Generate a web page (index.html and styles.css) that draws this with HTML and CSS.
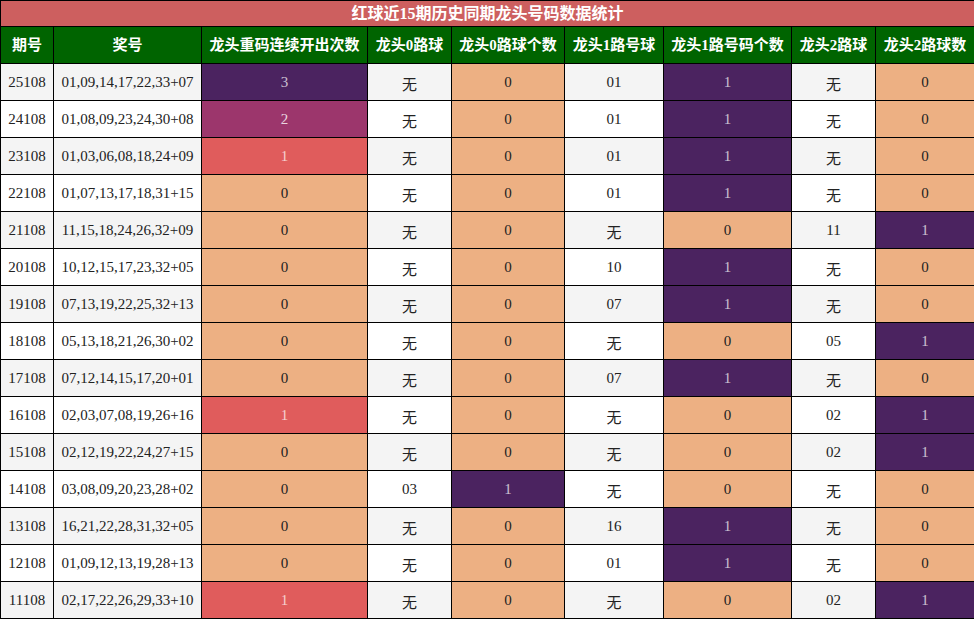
FILE: index.html
```html
<!DOCTYPE html>
<html lang="zh">
<head>
<meta charset="utf-8">
<title>红球近15期历史同期龙头号码数据统计</title>
<link rel="stylesheet" href="styles.css">
</head>
<body>
<table class="stats">
  <colgroup>
    <col class="c1"><col class="c2"><col class="c3"><col class="c4"><col class="c5"><col class="c6"><col class="c7"><col class="c8"><col class="c9">
  </colgroup>
  <thead>
    <tr class="title"><th colspan="9">红球近15期历史同期龙头号码数据统计</th></tr>
    <tr class="head">
      <th>期号</th><th>奖号</th><th>龙头重码连续开出次数</th><th>龙头0路球</th><th>龙头0路球个数</th><th>龙头1路号球</th><th>龙头1路号码个数</th><th>龙头2路球</th><th>龙头2路球数</th>
    </tr>
  </thead>
  <tbody>
    <tr><td>25108</td><td>01,09,14,17,22,33+07</td><td class="pu">3</td><td class="wu">无</td><td class="or">0</td><td>01</td><td class="pu">1</td><td class="wu">无</td><td class="or">0</td></tr>
    <tr><td>24108</td><td>01,08,09,23,24,30+08</td><td class="mg">2</td><td class="wu">无</td><td class="or">0</td><td>01</td><td class="pu">1</td><td class="wu">无</td><td class="or">0</td></tr>
    <tr><td>23108</td><td>01,03,06,08,18,24+09</td><td class="rd">1</td><td class="wu">无</td><td class="or">0</td><td>01</td><td class="pu">1</td><td class="wu">无</td><td class="or">0</td></tr>
    <tr><td>22108</td><td>01,07,13,17,18,31+15</td><td class="or">0</td><td class="wu">无</td><td class="or">0</td><td>01</td><td class="pu">1</td><td class="wu">无</td><td class="or">0</td></tr>
    <tr><td>21108</td><td>11,15,18,24,26,32+09</td><td class="or">0</td><td class="wu">无</td><td class="or">0</td><td class="wu">无</td><td class="or">0</td><td>11</td><td class="pu">1</td></tr>
    <tr><td>20108</td><td>10,12,15,17,23,32+05</td><td class="or">0</td><td class="wu">无</td><td class="or">0</td><td>10</td><td class="pu">1</td><td class="wu">无</td><td class="or">0</td></tr>
    <tr><td>19108</td><td>07,13,19,22,25,32+13</td><td class="or">0</td><td class="wu">无</td><td class="or">0</td><td>07</td><td class="pu">1</td><td class="wu">无</td><td class="or">0</td></tr>
    <tr><td>18108</td><td>05,13,18,21,26,30+02</td><td class="or">0</td><td class="wu">无</td><td class="or">0</td><td class="wu">无</td><td class="or">0</td><td>05</td><td class="pu">1</td></tr>
    <tr><td>17108</td><td>07,12,14,15,17,20+01</td><td class="or">0</td><td class="wu">无</td><td class="or">0</td><td>07</td><td class="pu">1</td><td class="wu">无</td><td class="or">0</td></tr>
    <tr><td>16108</td><td>02,03,07,08,19,26+16</td><td class="rd">1</td><td class="wu">无</td><td class="or">0</td><td class="wu">无</td><td class="or">0</td><td>02</td><td class="pu">1</td></tr>
    <tr><td>15108</td><td>02,12,19,22,24,27+15</td><td class="or">0</td><td class="wu">无</td><td class="or">0</td><td class="wu">无</td><td class="or">0</td><td>02</td><td class="pu">1</td></tr>
    <tr><td>14108</td><td>03,08,09,20,23,28+02</td><td class="or">0</td><td>03</td><td class="pu">1</td><td class="wu">无</td><td class="or">0</td><td class="wu">无</td><td class="or">0</td></tr>
    <tr><td>13108</td><td>16,21,22,28,31,32+05</td><td class="or">0</td><td class="wu">无</td><td class="or">0</td><td>16</td><td class="pu">1</td><td class="wu">无</td><td class="or">0</td></tr>
    <tr><td>12108</td><td>01,09,12,13,19,28+13</td><td class="or">0</td><td class="wu">无</td><td class="or">0</td><td>01</td><td class="pu">1</td><td class="wu">无</td><td class="or">0</td></tr>
    <tr><td>11108</td><td>02,17,22,26,29,33+10</td><td class="rd">1</td><td class="wu">无</td><td class="or">0</td><td class="wu">无</td><td class="or">0</td><td>02</td><td class="pu">1</td></tr>
  </tbody>
</table>
</body>
</html>
```

FILE: styles.css
```css
html, body {
  margin: 0;
  padding: 0;
  background: #ffffff;
}

.stats {
  border-collapse: collapse;
  table-layout: fixed;
  width: 974px;
  font-family: "Liberation Serif", "Noto Sans CJK SC", serif;
  font-size: 15px;
  line-height: 20px;
  color: #222222;
}

.c1 { width: 53px; }
.c2 { width: 148px; }
.c3 { width: 166px; }
.c4 { width: 84px; }
.c5 { width: 113px; }
.c6 { width: 99px; }
.c7 { width: 128px; }
.c8 { width: 84px; }
.c9 { width: 99px; }

.stats th,
.stats td {
  border: 1px solid #000000;
  text-align: center;
  padding: 0;
  white-space: nowrap;
  line-height: 20px;
}

.title th {
  background: #cd5f5f;
  color: #ffffff;
  font-size: 16px;
  font-weight: bold;
  height: 25px;
  line-height: 24px;
}

.head th {
  background: #006400;
  color: #ffffff;
  font-size: 15px;
  font-weight: bold;
  height: 36px;
}

.stats tbody td {
  height: 36px;
  background: #ffffff;
}

.stats tbody tr:nth-child(odd) td {
  background: #f4f4f4;
}

.stats tbody td.wu {
  font-family: "Noto Sans CJK SC", sans-serif;
  font-size: 15px;
  line-height: 20px;
  height: 32px;
  padding-top: 4px;
}

.stats tbody tr td.pu {
  background: #4b2360;
  color: rgba(255, 255, 255, 0.72);
}

.stats tbody tr td.mg {
  background: #9c366c;
  color: rgba(255, 255, 255, 0.8);
}

.stats tbody tr td.rd {
  background: #e05c5c;
  color: rgba(255, 255, 255, 0.72);
}

.stats tbody tr td.or {
  background: #edb083;
  color: #222222;
}
```
